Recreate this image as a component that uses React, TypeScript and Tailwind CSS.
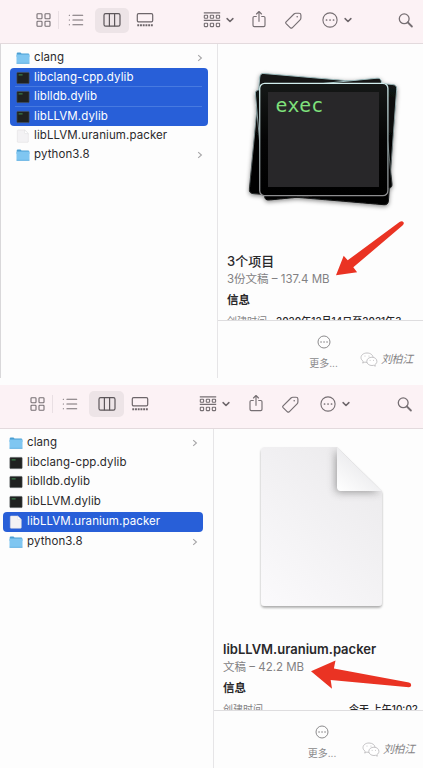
import React from 'react';
import clsx from 'clsx';

type Kind = 'folder' | 'exec' | 'doc';
type Entry = { name: string; kind: Kind; width: string };

const entries: Entry[] = [
  { name: 'clang', kind: 'folder', width: 'tracking-[0.1px]' },
  { name: 'libclang-cpp.dylib', kind: 'exec', width: 'tracking-[0.1px]' },
  { name: 'liblldb.dylib', kind: 'exec', width: 'tracking-[0.1px]' },
  { name: 'libLLVM.dylib', kind: 'exec', width: 'tracking-[0.1px]' },
  { name: 'libLLVM.uranium.packer', kind: 'doc', width: 'tracking-[0.1px]' },
  { name: 'python3.8', kind: 'folder', width: 'tracking-[0.1px]' },
];

function FileIcon({ kind }: { kind: Kind }) {
  if (kind === 'folder') {
    return (
      <svg className="h-[14px] w-[14px] shrink-0" viewBox="0 0 14 14">
        <path d="M.7 2.6Q.7 1.4 1.8 1.4h2.7l1 1h6.6q1.2 0 1.2 1.2V6H.7z" fill="#4a9fd3" />
        <rect x=".5" y="3.6" width="13" height="9.2" rx=".9" fill="#7fc6f1" />
        <path d="M.6 12.3h12.8" stroke="#62afe0" strokeWidth=".8" />
      </svg>
    );
  }
  if (kind === 'exec') {
    return (
      <svg className="h-[14px] w-[14px] shrink-0" viewBox="0 0 14 14">
        <rect x=".9" y="1.4" width="12.2" height="11.2" rx=".7" fill="#202221" stroke="#4b5254" strokeWidth=".6" />
        <path d="M2.6 3.9h4" stroke="#3f9152" strokeWidth="1" />
      </svg>
    );
  }
  return (
    <svg className="h-[14px] w-[14px] shrink-0" viewBox="0 0 14 14">
      <path d="M2 1h6.6l3.7 3.6v8q0 .7-.7.7H2q-.7 0-.7-.7V1.7Q1.3 1 2 1z" fill="#f3f2f4" stroke="#dcdbdd" strokeWidth=".5" />
      <path d="M8.6 1v3q0 .6.6.6h3.1z" fill="#fff" stroke="#d5d4d6" strokeWidth=".4" />
    </svg>
  );
}

function Chevron({ className }: { className: string }) {
  return (
    <svg className={clsx('h-2 w-2 shrink-0', className)} viewBox="0 0 8 8" fill="none" stroke="#6d666a" strokeWidth="1.5" strokeLinecap="round" strokeLinejoin="round">
      <path d="M1.1 2.6 4 5.5l2.9-2.9" />
    </svg>
  );
}

function Toolbar({ second }: { second?: boolean }) {
  const m = (a: string, b: string) => (second ? b : a);
  return (
    <div className={clsx('flex shrink-0 items-center border-b border-[#e3dadd] bg-[#fcf2f5]', second ? 'h-11 pl-[30px] pb-[5px]' : 'h-11 pl-[36px] pb-[3px]')}>
      <svg className="h-4 w-[15px] shrink-0" viewBox="0 0 15 16" fill="none" stroke="#766f73" strokeWidth="1.1">
        <rect x="1" y="1.7" width="5" height="5" rx=".8" />
        <rect x="9" y="1.7" width="5" height="5" rx=".8" />
        <rect x="1" y="9.3" width="5" height="5" rx=".8" />
        <rect x="9" y="9.3" width="5" height="5" rx=".8" />
      </svg>
      <div className="ml-[7px] h-[18px] w-px shrink-0 bg-[#e9dfe3]" />
      <svg className="ml-[9px] h-4 w-4 shrink-0" viewBox="0 0 16 16" fill="none" stroke="#766f73" strokeWidth="1.1" strokeLinecap="round">
        <path d="M4.9 3.2h9.8M4.9 8h9.8M4.9 12.8h9.8M1.3 3.2h.2M1.3 8h.2M1.3 12.8h.2" />
      </svg>
      <div className={clsx('ml-[11px] flex shrink-0 items-center justify-center rounded-[5px] bg-[#ede4e7]', m('h-[25px] w-[34px]', 'h-[26px] w-[35px]'))}>
        <svg className="h-4 w-[18px]" viewBox="0 0 18 16" fill="none" stroke="#5c565a" strokeWidth="1.2">
          <rect x="1" y="1.7" width="16" height="12.5" rx="1.6" />
          <path d="M6.4 1.7v12.5M11.6 1.7v12.5" />
        </svg>
      </div>
      <svg className="ml-[7px] h-4 w-[18px] shrink-0" viewBox="0 0 18 16" fill="none" stroke="#6d666a" strokeWidth="1.2">
        <rect x="1.3" y="1.7" width="15.4" height="8.2" rx="1.3" />
        <path d="M1.3 13.3h15.6" strokeWidth="2" strokeDasharray="1.9 .82" />
      </svg>
      <svg className={clsx('h-4 w-[18px] shrink-0', m('ml-[49px]', 'ml-[50px]'))} viewBox="0 0 18 16" fill="none" stroke="#766f73" strokeWidth="1.1">
        <path d="M.8.9h16.4M.8 8.4h16.4" />
        <rect x="1.3" y="3.3" width="3.3" height="3" rx=".5" />
        <rect x="7.3" y="3.3" width="3.3" height="3" rx=".5" />
        <rect x="13.3" y="3.3" width="3.3" height="3" rx=".5" />
        <rect x="1.3" y="11.2" width="3.3" height="3.4" rx=".5" />
        <rect x="7.3" y="11.2" width="3.3" height="3.4" rx=".5" />
        <rect x="13.3" y="11.2" width="3.3" height="3.4" rx=".5" />
      </svg>
      <Chevron className="ml-[5px]" />
      <svg className={clsx('mb-[2px] h-[18px] w-[14px] shrink-0', m('ml-[18px]', 'ml-[19px]'))} viewBox="0 0 14 18" fill="none" stroke="#766f73" strokeWidth="1.15" strokeLinecap="round" strokeLinejoin="round">
        <path d="M4.3 6.5H2.3Q1 6.5 1 7.8v7.5q0 1.3 1.3 1.3h9.4q1.3 0 1.3-1.3V7.8q0-1.3-1.3-1.3h-2M7 11.3V1.6M4.5 4 7 1.5 9.5 4" />
      </svg>
      <svg className="ml-[19px] h-[17px] w-[17px] shrink-0" viewBox="0 0 17 17" fill="none" stroke="#766f73" strokeWidth="1.15" strokeLinejoin="round">
        <path d="M1.1 9.9 9 2q.8-.8 1.9-.8h3.2q1.8 0 1.8 1.8v3q0 1-.8 1.8l-7.9 8q-.9.8-1.8 0l-4.3-4.2q-.8-.9 0-1.7z" />
        <circle cx="12.2" cy="4.8" r=".8" fill="#766f73" stroke="none" />
      </svg>
      <svg className={clsx('h-4 w-4 shrink-0', m('ml-[20px]', 'ml-[21px]'))} viewBox="0 0 16 16" fill="none" stroke="#766f73" strokeWidth="1.1">
        <circle cx="8" cy="8" r="7.1" />
        <path d="M4.5 8h.1M8 8h.1M11.5 8h.1" strokeWidth="1.7" strokeLinecap="round" />
      </svg>
      <Chevron className={m('ml-[6px]', 'ml-[6px]')} />
      <svg className={clsx('h-4 w-[15px] shrink-0', m('ml-[46px]', 'ml-[47px]'))} viewBox="0 0 15 16" fill="none" stroke="#766f73" strokeWidth="1.3" strokeLinecap="round">
        <circle cx="6.2" cy="6.8" r="4.9" />
        <path d="m9.9 10.5 4 4" strokeWidth="1.8" />
      </svg>
    </div>
  );
}

function FileRow({ entry, selected, line, className }: { entry: Entry; selected?: boolean; line?: boolean; className?: string }) {
  return (
    <div className={clsx('flex items-center pl-[6px]', className, selected && 'bg-[#285fd8] text-white', !selected && 'text-[#2b2a2c]', line && 'bg-[linear-gradient(#477ae0,#477ae0)] bg-[length:187px_1px] bg-[position:5px_100%] bg-no-repeat')}>
      <FileIcon kind={entry.kind} />
      <span className="ml-[4px] whitespace-nowrap text-[11.5px] leading-none tracking-[0.1px]">{entry.name}</span>
      {entry.kind === 'folder' && (
        <svg className="ml-auto mr-[5px] h-2 w-[6px]" viewBox="0 0 6 8" fill="none" stroke="#a6a5a7" strokeWidth="1.1">
          <path d="M1.2 1.2 4.4 4 1.2 6.8" />
        </svg>
      )}
    </div>
  );
}

function ExecStack() {
  return (
    <svg className="ml-[27px] h-[146px] w-[160px]" viewBox="245 68 160 146">
      <defs>
        <filter id="soft" x="-10%" y="-10%" width="120%" height="125%">
          <feDropShadow dx="0" dy="1.5" stdDeviation="2" floodOpacity=".45" />
        </filter>
        <linearGradient id="edge" x1="0" y1="0" x2="0" y2="1">
          <stop offset="0" stopColor="#d2eeee" />
          <stop offset=".6" stopColor="#95a3a6" />
          <stop offset="1" stopColor="#8c8c8e" />
        </linearGradient>
        <linearGradient id="dim" x1="0" y1="0" x2="0" y2="1">
          <stop offset="0" stopColor="#9fbcbe" />
          <stop offset=".5" stopColor="#79888a" />
          <stop offset="1" stopColor="#111" />
        </linearGradient>
        <linearGradient id="case" x1="0" y1="0" x2="0" y2="1">
          <stop offset="0" stopColor="#151817" />
          <stop offset=".5" stopColor="#050505" />
          <stop offset="1" stopColor="#000" />
        </linearGradient>
      </defs>
      <g filter="url(#soft)" stroke="url(#dim)" strokeWidth="1" strokeLinejoin="round" fill="url(#case)">
        <path d="M264 73.5 393 84.6q4 .5 3.7 4.5L388.4 201q-.4 4-4.4 3.7L253 193.6q-4-.4-3.6-4.4L259.8 77q.4-4 4.2-3.5z" />
        <path d="m259 89.8 118-11.6q4-.4 4.4 3.6L392 184q.4 4-3.6 4.4L269 200q-4 .4-4.4-3.6L255.4 94q-.4-3.8 3.6-4.2z" />
      </g>
      <rect x="259.7" y="83.3" width="128.2" height="112.4" rx="5" fill="url(#case)" stroke="url(#edge)" strokeWidth="1.3" />
      <rect x="268" y="92" width="111" height="95" fill="#282729" />
      <text x="275.5" y="112" fill="#7fe27c" fontSize="19.8" fontFamily="DejaVu Sans Mono, monospace">exec</text>
    </svg>
  );
}

function Document() {
  return (
    <svg className="ml-[36px] h-[176px] w-[140px]" viewBox="250 440 140 176">
      <defs>
        <filter id="paper" x="-10%" y="-10%" width="120%" height="120%">
          <feDropShadow dx="0" dy="1.8" stdDeviation="1" floodOpacity=".33" />
        </filter>
        <filter id="blur" x="-40%" y="-40%" width="180%" height="180%">
          <feGaussianBlur stdDeviation="4" />
        </filter>
        <linearGradient id="sheet" x1="0" y1="1" x2=".7" y2="0">
          <stop offset="0" stopColor="#fbfafc" />
          <stop offset="1" stopColor="#ecebed" />
        </linearGradient>
        <linearGradient id="fold" x1="0" y1="1" x2=".5" y2=".4">
          <stop offset="0" stopColor="#fff" />
          <stop offset="1" stopColor="#ededef" />
        </linearGradient>
        <clipPath id="page">
          <path d="M265 447h72l45 44v112q0 4-4 4H265q-4 0-4-4V451q0-4 4-4z" />
        </clipPath>
      </defs>
      <path d="M265 447h72l45 44v111q0 4-4 4H265q-4 0-4-4V451q0-4 4-4z" fill="url(#sheet)" filter="url(#paper)" />
      <g clipPath="url(#page)">
        <path d="M336 449v43h44z" fill="#777" opacity=".75" filter="url(#blur)" />
      </g>
      <path d="M337 447.3v40q0 3.7 3.7 3.7h41z" fill="url(#fold)" />
    </svg>
  );
}

function Watermark() {
  return (
    <div className="flex items-center gap-[3px]">
      <svg className="h-[15px] w-[18px]" viewBox="0 0 18 15" fill="#fff" stroke="#b5b4b6" strokeWidth=".8">
        <path d="M7 1C3.6 1 1 3 1 5.6c0 1.5.9 2.7 2.2 3.6l-.5 1.9 2.1-1c.7.2 1.4.3 2.2.3 3.4 0 6-2.1 6-4.8S10.400 1 7 1z" />
        <path d="M12 5.200c-3 0-5.200 1.800-5.200 4.200s2.300 4.100 5.200 4.100l1.500-.2 1.800.9-.4-1.600c1.300-.8 2-1.900 2-3.200 0-2.400-2.100-4.200-4.900-4.200z" />
        <path d="M4.700 4.100h.6M8.700 4.100h.6M9.800 8.400h.6M13.400 8.400h.6" stroke="#99989a" />
      </svg>
      <span className="text-[11px] leading-none tracking-[-0.4px] text-[#858486] italic">刘柏江</span>
    </div>
  );
}

function More({ second }: { second?: boolean }) {
  return (
    <div className="relative flex flex-1 flex-col border-t border-[#dedddf]">
      <div className={clsx('flex flex-col items-center', second ? 'mr-[-5px] w-[216px] pt-[14px]' : 'w-[211px] pt-[14px]')}>
        <svg className="h-[14px] w-[14px]" viewBox="0 0 14 14" fill="none" stroke="#7f7e80" strokeWidth=".9">
          <circle cx="7" cy="7" r="6" />
          <path d="M4 7h.1M7 7h.1M10 7h.1" strokeWidth="1.4" strokeLinecap="round" />
        </svg>
        <span className="mt-[9px] text-[10px] leading-none text-[#8a898b]">更多...</span>
      </div>
      <div className={clsx('absolute', second ? 'top-[31px] left-[148px]' : 'top-[31px] left-[142px]')}>
        <Watermark />
      </div>
    </div>
  );
}

export default function App() {
  return (
    <div className="relative h-[768px] w-[423px] overflow-hidden bg-[#fdfdfd] font-[Inter,'Noto_Sans_CJK_SC',sans-serif]">
      <section className="flex h-[378px] flex-col">
        <Toolbar />
        <div className="flex flex-1 border-l border-[#d9d8da]">
          <div className="w-[217px] border-r border-[#e6e5e7] pt-[4px] pr-[9px] pl-[9px]">
            <FileRow entry={entries[0]} className="h-5" />
            <div className="overflow-hidden rounded-[4px]">
              <FileRow entry={entries[1]} selected line className="h-[19px]" />
              <FileRow entry={entries[2]} selected line className="h-5" />
              <FileRow entry={entries[3]} selected className="h-[19px]" />
            </div>
            <FileRow entry={entries[4]} className="h-[19px]" />
            <FileRow entry={entries[5]} className="h-5" />
          </div>
          <div className="flex min-w-0 flex-1 flex-col">
            <div className="h-[276px] overflow-hidden pt-[24px]">
              <ExecStack />
              <div className="mt-[40px] pl-[9px] whitespace-nowrap">
                <div className="text-[13px] leading-[14px] font-medium text-[#29282a]">3个项目</div>
                <div className="mt-[4px] text-[11.5px] leading-[14px] text-[#828183]">3份文稿 – 137.4 MB</div>
                <div className="mt-[8px] text-[11.5px] leading-[13px] font-bold text-[#29282a]">信息</div>
                <div className="mt-[8px] flex text-[10px] leading-[12px]">
                  <span className="w-[49px] text-[#828183]">创建时间</span>
                  <span className="font-medium text-[#29282a]">2020年12月14日至2021年3</span>
                </div>
              </div>
            </div>
            <More />
          </div>
        </div>
      </section>

      <section className="mt-[7px] flex h-[383px] flex-col">
        <Toolbar second />
        <div className="flex flex-1">
          <div className="w-[214px] border-r border-[#e6e5e7] pt-[4px] pr-[10px] pl-[3px]">
            <FileRow entry={entries[0]} className="h-5" />
            <FileRow entry={entries[1]} className="h-[19px]" />
            <FileRow entry={entries[2]} className="h-5" />
            <FileRow entry={entries[3]} className="h-5" />
            <FileRow entry={entries[4]} selected className="h-5 rounded-[4px]" />
            <FileRow entry={entries[5]} className="h-[19px]" />
          </div>
          <div className="flex min-w-0 flex-1 flex-col">
            <div className="h-[281px] overflow-hidden pt-[11px]">
              <Document />
              <div className="mt-[26px] pl-[9px] whitespace-nowrap">
                <div className="text-[13px] leading-[14px] font-semibold text-[#29282a]">libLLVM.uranium.packer</div>
                <div className="mt-[4px] text-[11.5px] leading-[14px] text-[#828183]">文稿 – 42.2 MB</div>
                <div className="mt-[8px] text-[11.5px] leading-[13px] font-bold text-[#29282a]">信息</div>
                <div className="mt-[8px] flex justify-between pr-[5px] text-[10px] leading-[12px]">
                  <span className="text-[#828183]">创建时间</span>
                  <span className="font-medium text-[#29282a]">今天 上午10:02</span>
                </div>
              </div>
            </div>
            <More second />
          </div>
        </div>
      </section>

      <svg className="pointer-events-none absolute top-0 left-0 h-[768px] w-[423px]" viewBox="0 0 423 768" fill="#ea3323">
        <path d="m336 275.300 7.700-19.600 4 4.600L399.500 222q2.600-1.500 4 .2 1 1.500-1 3.300l-49.200 41.800 3.800 5z" />
        <path d="m311 671.300 24.500-10.700-1.600 7.800 75.100 14q2.400.6 2.200 2.800-.2 2-2.300 2.100L330.700 680l1.300 8.800z" />
      </svg>
    </div>
  );
}
